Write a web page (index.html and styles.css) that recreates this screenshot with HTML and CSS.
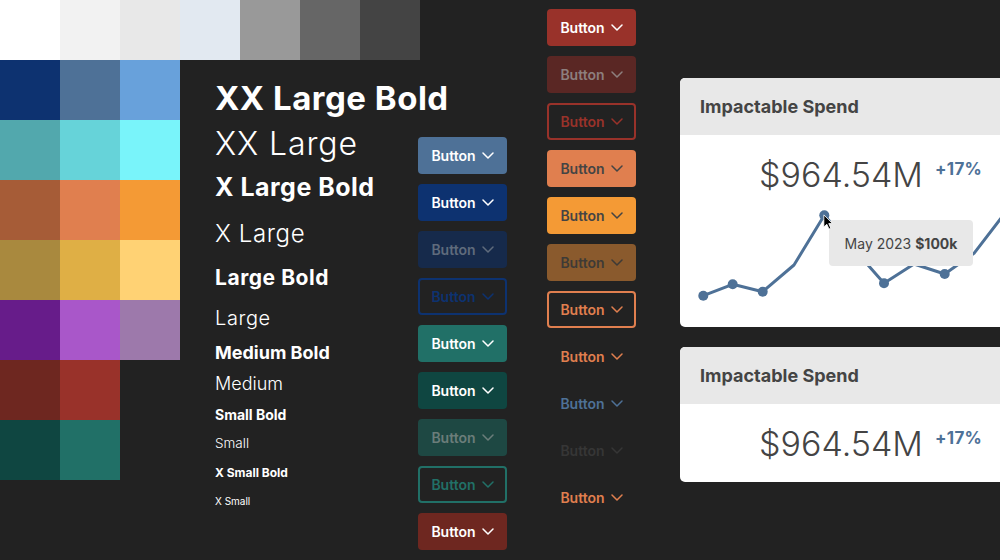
FILE: index.html
```html
<!DOCTYPE html>
<html>
<head>
<meta charset="utf-8">
<title>Design tokens</title>
<link rel="stylesheet" href="styles.css">
</head>
<body>
<div class="page">
  <div class="left">
    <div class="swatch-row">
      <div class="sw c-white"></div>
      <div class="sw c-g1"></div>
      <div class="sw c-g2"></div>
      <div class="sw c-ice"></div>
      <div class="sw c-g3"></div>
      <div class="sw c-g4"></div>
      <div class="sw c-g5"></div>
    </div>
    <div class="lower">
      <div class="swatch-grid">
        <div class="sw c-navy"></div><div class="sw c-steel"></div><div class="sw c-sky"></div>
        <div class="sw c-teal1"></div><div class="sw c-teal2"></div><div class="sw c-teal3"></div>
        <div class="sw c-rust"></div><div class="sw c-coral"></div><div class="sw c-orange"></div>
        <div class="sw c-olive"></div><div class="sw c-gold"></div><div class="sw c-butter"></div>
        <div class="sw c-purple"></div><div class="sw c-violet"></div><div class="sw c-mauve"></div>
        <div class="sw c-maroon"></div><div class="sw c-red"></div>
        <div class="sw c-pine row-start"></div><div class="sw c-green"></div>
      </div>
      <div class="type">
        <div class="t t1">XX Large Bold</div>
        <div class="t t2">XX Large</div>
        <div class="t t3">X Large Bold</div>
        <div class="t t4">X Large</div>
        <div class="t t5">Large Bold</div>
        <div class="t t6">Large</div>
        <div class="t t7">Medium Bold</div>
        <div class="t t8">Medium</div>
        <div class="t t9">Small Bold</div>
        <div class="t t10">Small</div>
        <div class="t t11">X Small Bold</div>
        <div class="t t12">X Small</div>
      </div>
      <div class="btncol btncol1">
        <div class="btn b-steel">Button<svg class="chev" viewBox="0 0 12 7"><path d="M1 1 L6 6 L11 1"/></svg></div>
        <div class="btn b-navy">Button<svg class="chev" viewBox="0 0 12 7"><path d="M1 1 L6 6 L11 1"/></svg></div>
        <div class="btn b-navy-dis">Button<svg class="chev" viewBox="0 0 12 7"><path d="M1 1 L6 6 L11 1"/></svg></div>
        <div class="btn b-navy-out">Button<svg class="chev" viewBox="0 0 12 7"><path d="M1 1 L6 6 L11 1"/></svg></div>
        <div class="btn b-teal">Button<svg class="chev" viewBox="0 0 12 7"><path d="M1 1 L6 6 L11 1"/></svg></div>
        <div class="btn b-pine">Button<svg class="chev" viewBox="0 0 12 7"><path d="M1 1 L6 6 L11 1"/></svg></div>
        <div class="btn b-teal-dis">Button<svg class="chev" viewBox="0 0 12 7"><path d="M1 1 L6 6 L11 1"/></svg></div>
        <div class="btn b-teal-out">Button<svg class="chev" viewBox="0 0 12 7"><path d="M1 1 L6 6 L11 1"/></svg></div>
        <div class="btn b-maroon">Button<svg class="chev" viewBox="0 0 12 7"><path d="M1 1 L6 6 L11 1"/></svg></div>
      </div>
    </div>
  </div>
  <div class="btncol btncol2">
    <div class="btn b-red">Button<svg class="chev" viewBox="0 0 12 7"><path d="M1 1 L6 6 L11 1"/></svg></div>
    <div class="btn b-red-dis">Button<svg class="chev" viewBox="0 0 12 7"><path d="M1 1 L6 6 L11 1"/></svg></div>
    <div class="btn b-red-out">Button<svg class="chev" viewBox="0 0 12 7"><path d="M1 1 L6 6 L11 1"/></svg></div>
    <div class="btn b-coral">Button<svg class="chev" viewBox="0 0 12 7"><path d="M1 1 L6 6 L11 1"/></svg></div>
    <div class="btn b-orange">Button<svg class="chev" viewBox="0 0 12 7"><path d="M1 1 L6 6 L11 1"/></svg></div>
    <div class="btn b-brown-dis">Button<svg class="chev" viewBox="0 0 12 7"><path d="M1 1 L6 6 L11 1"/></svg></div>
    <div class="btn b-coral-out">Button<svg class="chev" viewBox="0 0 12 7"><path d="M1 1 L6 6 L11 1"/></svg></div>
    <div class="btn b-text-coral">Button<svg class="chev" viewBox="0 0 12 7"><path d="M1 1 L6 6 L11 1"/></svg></div>
    <div class="btn b-text-steel">Button<svg class="chev" viewBox="0 0 12 7"><path d="M1 1 L6 6 L11 1"/></svg></div>
    <div class="btn b-text-dis">Button<svg class="chev" viewBox="0 0 12 7"><path d="M1 1 L6 6 L11 1"/></svg></div>
    <div class="btn b-text-coral">Button<svg class="chev" viewBox="0 0 12 7"><path d="M1 1 L6 6 L11 1"/></svg></div>
  </div>
  <div class="cards">
    <div class="card">
      <div class="card-head">Impactable Spend</div>
      <div class="card-body">
        <div class="value-row">
          <span class="value">$964.54M</span>
          <span class="delta">+17%</span>
        </div>
        <svg class="chart" width="340" height="122" viewBox="0 0 340 122">
          <polyline class="line" points="23.3,90.7 52.7,79.3 82.7,86.7 114,60 144.3,10.3 204,78.3 234,59 264.7,69 294,48.3 340,-11.5"/>
          <circle class="dot" cx="23.3" cy="90.7" r="5"/>
          <circle class="dot" cx="52.7" cy="79.3" r="5"/>
          <circle class="dot" cx="82.7" cy="86.7" r="5"/>
          <circle class="dot" cx="144.3" cy="10.3" r="5"/>
          <circle class="dot" cx="204" cy="78.3" r="5"/>
          <circle class="dot" cx="264.7" cy="69" r="5"/>
        </svg>
        <div class="tooltip">May 2023 <b>$100k</b></div>
        <svg class="cursor" width="10" height="16" viewBox="0 0 12 19"><path d="M1 1 L1 15.5 L4.6 12.2 L7.2 18 L9.4 17 L6.9 11.4 L11.5 11.4 Z"/></svg>
      </div>
    </div>
    <div class="card">
      <div class="card-head">Impactable Spend</div>
      <div class="card-body short">
        <div class="value-row">
          <span class="value">$964.54M</span>
          <span class="delta">+17%</span>
        </div>
      </div>
    </div>
  </div>
</div>
</body>
</html>
```
FILE: styles.css
```css
html, body {
  margin: 0;
  padding: 0;
}
body {
  background: #222222;
  width: 1000px;
  height: 560px;
  overflow: hidden;
  font-family: Inter, "Noto Sans", sans-serif;
  color: #ffffff;
}
.page {
  display: flex;
  align-items: flex-start;
  width: 1000px;
}
.left {
  flex: none;
  width: 507px;
}
.swatch-row {
  display: flex;
}
.sw {
  width: 60px;
  height: 60px;
}
.lower {
  display: flex;
  align-items: flex-start;
}
.swatch-grid {
  flex: none;
  display: grid;
  grid-template-columns: repeat(3, 60px);
  grid-auto-rows: 60px;
  width: 180px;
}
.row-start { grid-column-start: 1; }

.c-white { background: #ffffff; }
.c-g1 { background: #f2f2f2; }
.c-g2 { background: #e8e8e8; }
.c-ice { background: #e2e9f1; }
.c-g3 { background: #999999; }
.c-g4 { background: #666666; }
.c-g5 { background: #444444; }
.c-navy { background: #0d3270; }
.c-steel { background: #4e7197; }
.c-sky { background: #68a1db; }
.c-teal1 { background: #52a8ad; }
.c-teal2 { background: #66d3d9; }
.c-teal3 { background: #79f4fa; }
.c-rust { background: #a65c37; }
.c-coral { background: #e07f4f; }
.c-orange { background: #f49a35; }
.c-olive { background: #a9893e; }
.c-gold { background: #dfaf45; }
.c-butter { background: #ffd274; }
.c-purple { background: #671c8a; }
.c-violet { background: #a957c9; }
.c-mauve { background: #9d79ab; }
.c-maroon { background: #6e2720; }
.c-red { background: #99322a; }
.c-pine { background: #0f4641; }
.c-green { background: #217067; }

.type {
  flex: none;
  width: 203px;
  padding-left: 35px;
  padding-top: 15px;
  white-space: nowrap;
}
.t { color: #ffffff; }
.t1 { font-size: 33px; font-weight: 700; line-height: 46px; letter-spacing: 0.5px; }
.t2 { font-size: 32px; font-weight: 300; line-height: 46px; letter-spacing: 0.9px; }
.t3 { font-size: 25px; font-weight: 700; line-height: 41px; letter-spacing: 0.5px; }
.t4 { font-size: 24px; font-weight: 300; line-height: 52px; letter-spacing: 0.6px; }
.t5 { font-size: 21px; font-weight: 700; line-height: 35px; letter-spacing: 0.55px; }
.t6 { font-size: 20px; font-weight: 300; line-height: 47px; letter-spacing: 0.6px; }
.t7 { font-size: 18px; font-weight: 700; line-height: 21px; }
.t8 { font-size: 18px; font-weight: 300; line-height: 42px; }
.t9 { font-size: 14px; font-weight: 700; line-height: 20px; }
.t10 { font-size: 13.5px; font-weight: 300; line-height: 36px; }
.t11 { font-size: 12px; font-weight: 700; line-height: 24px; }
.t12 { font-size: 10px; font-weight: 400; line-height: 33px; }

.btncol {
  flex: none;
  display: flex;
  flex-direction: column;
  gap: 10px;
  width: 89px;
}
.btncol1 { margin-top: 77px; }
.btncol2 { margin-left: 40px; margin-top: 9px; }
.btn {
  box-sizing: border-box;
  width: 89px;
  height: 37px;
  border-radius: 4px;
  display: flex;
  align-items: center;
  justify-content: center;
  gap: 6px;
  font-size: 14px;
  font-weight: 600;
  color: #ffffff;
}
.chev {
  width: 12px;
  height: 7px;
  fill: none;
  stroke: currentColor;
  stroke-width: 1.5;
  stroke-linecap: round;
  stroke-linejoin: round;
}
.b-steel { background: #4e7197; }
.b-navy { background: #0d3270; }
.b-navy-dis { background: #162a4b; color: #5f6b7c; }
.b-navy-out { border: 2px solid #0d3270; color: #0d3270; }
.b-teal { background: #217067; }
.b-pine { background: #0f4641; }
.b-teal-dis { background: #1e4843; color: #6b7d7a; }
.b-teal-out { border: 2px solid #217067; color: #217067; }
.b-maroon { background: #6e2720; }
.b-red { background: #99322a; }
.b-red-dis { background: #5a2724; color: #8d7f7e; }
.b-red-out { border: 2px solid #99322a; color: #99322a; }
.b-coral { background: #e07f4f; color: #444444; }
.b-orange { background: #f49a35; color: #444444; }
.b-brown-dis { background: #8a5a2d; color: #3e3a36; }
.b-coral-out { border: 2px solid #e07f4f; color: #e07f4f; }
.b-text-coral { color: #e07f4f; }
.b-text-steel { color: #4e7197; }
.b-text-dis { color: #363636; }

.cards {
  flex: none;
  margin-left: 44px;
  margin-top: 78px;
  display: flex;
  flex-direction: column;
  gap: 20px;
  width: 340px;
}
.card {
  border-radius: 5px;
  overflow: hidden;
  background: #ffffff;
}
.card-head {
  height: 57px;
  line-height: 57px;
  background: #e8e8e8;
  padding-left: 20px;
  font-size: 18px;
  font-weight: 700;
  color: #444444;
}
.card-body {
  position: relative;
  height: 192px;
  overflow: hidden;
}
.card-body.short { height: 78px; }
.value-row {
  display: flex;
  align-items: flex-start;
  gap: 12px;
  padding-left: 79px;
  height: 70px;
}
.value {
  font-size: 34px;
  font-weight: 300;
  line-height: 1;
  margin-top: 23px;
  color: #444444;
}
.delta {
  font-size: 17px;
  font-weight: 700;
  line-height: 1;
  margin-top: 26px;
  letter-spacing: 0.3px;
  color: #4e7197;
}
.chart {
  display: block;
  overflow: visible;
}
.line {
  fill: none;
  stroke: #4e7197;
  stroke-width: 3;
  stroke-linejoin: round;
}
.dot { fill: #4e7197; }
.tooltip {
  position: absolute;
  left: 149px;
  top: 85px;
  width: 144px;
  height: 46px;
  box-sizing: border-box;
  border-radius: 4px;
  background: #e8e8e8;
  display: flex;
  align-items: center;
  justify-content: center;
  font-size: 14px;
  color: #444444;
  white-space: pre;
}
.tooltip b { font-weight: 700; }
.cursor {
  position: absolute;
  left: 143px;
  top: 79px;
  fill: #000000;
  stroke: #ffffff;
  stroke-width: 1;
  stroke-linejoin: round;
}
```
